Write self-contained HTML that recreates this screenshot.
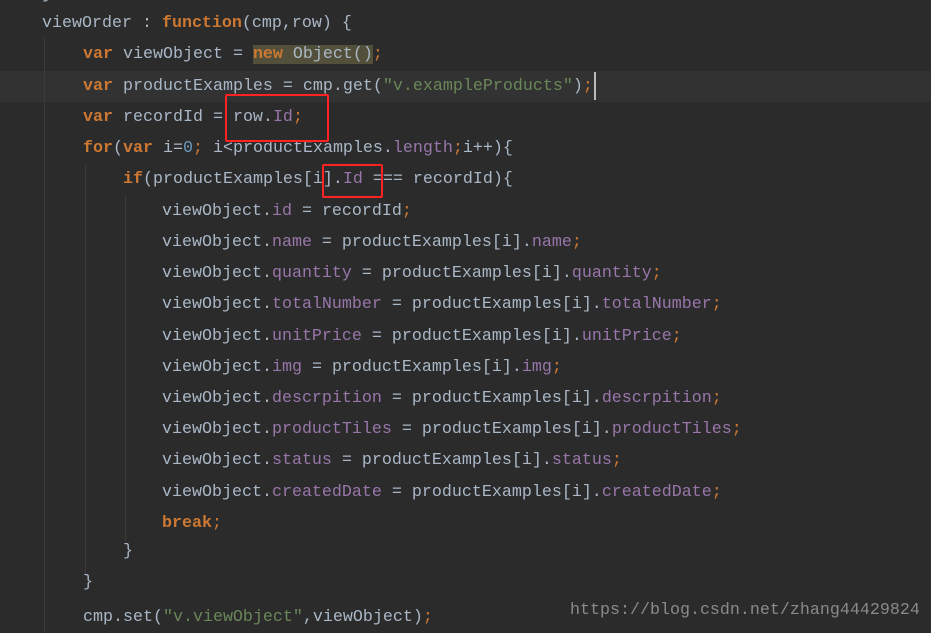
<!DOCTYPE html>
<html><head><meta charset="utf-8"><style>
html,body{margin:0;padding:0}
body{width:931px;height:632px;background:#2b2b2b;position:relative;overflow:hidden;font-family:"Liberation Mono",monospace;font-size:16.67px;color:#a9b7c6}
.l{position:absolute;white-space:pre;height:30px;line-height:30px}
.k{color:#cc7832;font-weight:bold}.f{color:#9876aa}.s{color:#6a8759}.n{color:#6897bb}.p{color:#cc7832}
.g{position:absolute;width:1px;background:#3b3b3b}
.box{position:absolute;border:2px solid #f22;border-radius:2px}
</style></head><body>
<div style="position:absolute;left:0;top:71px;width:931px;height:31px;background:#323232"></div>
<div class="g" style="left:44px;top:38px;height:594px"></div>
<div class="g" style="left:85px;top:165px;height:410px"></div>
<div class="g" style="left:125px;top:196px;height:345px"></div>
<div class="l" style="left:42px;top:-20px">}</div>
<div class="l" style="left:42px;top:9px">viewOrder : <span class="k">function</span>(cmp,row) {</div>
<div class="l" style="left:83px;top:40px"><span class="k">var</span> viewObject = <span style="background:#52503a"><span class="k">new</span> Object()</span><span class="p">;</span></div>
<div class="l" style="left:83px;top:72px"><span class="k">var</span> productExamples = cmp.<span>get</span>(<span class="s">"v.exampleProducts"</span>)<span class="p">;</span></div>
<div style="position:absolute;left:594px;top:72px;width:2px;height:28px;background:#bbb"></div>
<div class="l" style="left:83px;top:103px"><span class="k">var</span> recordId = row.<span class="f">Id</span><span class="p">;</span></div>
<div class="l" style="left:83px;top:134px"><span class="k">for</span>(<span class="k">var</span> i=<span class="n">0</span><span class="p">;</span> i&lt;productExamples.<span class="f">length</span><span class="p">;</span>i++){</div>
<div class="l" style="left:123px;top:165px"><span class="k">if</span>(productExamples[i].<span class="f">Id</span> === recordId){</div>
<div class="l" style="left:162px;top:197px">viewObject.<span class="f">id</span> = recordId<span class="p">;</span></div>
<div class="l" style="left:162px;top:228px">viewObject.<span class="f">name</span> = productExamples[i].<span class="f">name</span><span class="p">;</span></div>
<div class="l" style="left:162px;top:259px">viewObject.<span class="f">quantity</span> = productExamples[i].<span class="f">quantity</span><span class="p">;</span></div>
<div class="l" style="left:162px;top:290px">viewObject.<span class="f">totalNumber</span> = productExamples[i].<span class="f">totalNumber</span><span class="p">;</span></div>
<div class="l" style="left:162px;top:322px">viewObject.<span class="f">unitPrice</span> = productExamples[i].<span class="f">unitPrice</span><span class="p">;</span></div>
<div class="l" style="left:162px;top:353px">viewObject.<span class="f">img</span> = productExamples[i].<span class="f">img</span><span class="p">;</span></div>
<div class="l" style="left:162px;top:384px">viewObject.<span class="f">descrpition</span> = productExamples[i].<span class="f">descrpition</span><span class="p">;</span></div>
<div class="l" style="left:162px;top:415px">viewObject.<span class="f">productTiles</span> = productExamples[i].<span class="f">productTiles</span><span class="p">;</span></div>
<div class="l" style="left:162px;top:446px">viewObject.<span class="f">status</span> = productExamples[i].<span class="f">status</span><span class="p">;</span></div>
<div class="l" style="left:162px;top:478px">viewObject.<span class="f">createdDate</span> = productExamples[i].<span class="f">createdDate</span><span class="p">;</span></div>
<div class="l" style="left:162px;top:509px"><span class="k">break</span><span class="p">;</span></div>
<div class="l" style="left:123px;top:537px">}</div>
<div class="l" style="left:83px;top:568px">}</div>
<div class="l" style="left:83px;top:603px">cmp.set(<span class="s">"v.viewObject"</span>,viewObject)<span class="p">;</span></div>
<div class="box" style="left:225px;top:94px;width:100px;height:44px"></div>
<div class="box" style="left:322px;top:164px;width:57px;height:30px"></div>
<div style="position:absolute;left:570px;top:600px;font-family:'Liberation Mono',monospace;font-size:16.67px;line-height:22px;color:#8a8a8a;white-space:pre">https://blog.csdn.net/zhang44429824</div>
</body></html>
